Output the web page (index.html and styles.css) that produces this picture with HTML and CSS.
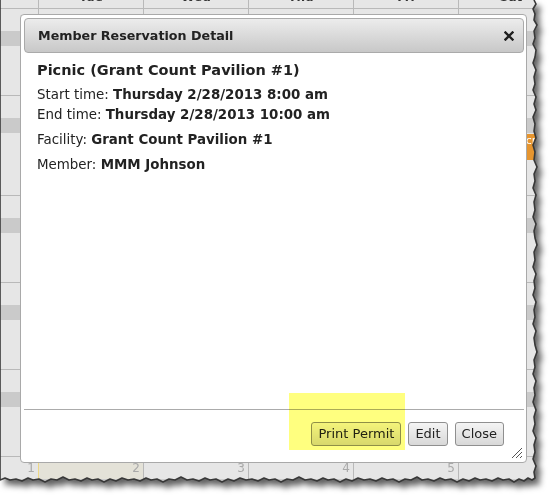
FILE: index.html
```html
<!DOCTYPE html>
<html>
<head>
<meta charset="utf-8">
<title>Member Reservation Detail</title>
<link rel="stylesheet" href="styles.css">
</head>
<body>
<div class="stage">
  <svg class="defs" width="0" height="0" aria-hidden="true">
    <defs>
      <clipPath id="tear">
        <polygon points="534,0 536,4 533,9 535,14 534,20 537,25 534,31 535,38 533,44 536,50 535,57 533,63 536,70 534,77 535,84 533,90 536,97 534,104 536,110 533,117 535,124 534,131 536,138 533,145 535,152 534,160 537,167 534,174 535,181 533,188 536,195 534,202 535,210 533,217 536,224 534,231 535,238 537,245 534,252 535,260 533,267 536,274 534,281 535,288 533,295 536,302 534,310 535,317 533,324 536,331 534,338 535,345 537,352 534,360 535,367 533,374 536,381 534,388 535,395 533,402 536,410 534,417 535,424 533,431 536,438 534,445 535,452 533,459 536,466 534,472 535,478 532,480 528,478 524,481 519,479 514,482 509,479 503,480 498,478 492,481 486,479 480,480 475,478 469,481 463,479 457,482 451,479 445,480 440,478 434,481 428,479 422,480 417,477 411,480 405,479 399,482 393,479 387,480 382,478 376,481 370,479 364,480 358,478 352,481 346,479 340,482 334,479 328,480 323,478 317,481 311,479 305,480 299,477 293,480 287,479 281,482 275,479 269,480 264,478 258,481 252,479 246,480 240,478 234,481 228,479 222,482 216,479 210,480 205,478 199,481 193,479 187,480 181,477 175,480 169,479 163,482 157,479 151,480 146,478 140,481 134,479 128,480 122,478 116,481 110,479 104,482 98,479 92,480 87,478 81,481 75,479 69,480 63,477 57,480 51,479 45,482 39,479 33,480 28,478 22,481 16,479 10,480 5,478 0,480 0,0"/>
      </clipPath>
    </defs>
  </svg>

  <div class="paper">
    <div class="sheet">
      <div class="calendar">
        <div class="cal-head">
          <div>Mon</div><div>Tue</div><div>Wed</div><div>Thu</div><div>Fri</div><div>Sat</div><div>Sun</div>
        </div>
        <div class="week">
          <div class="day"><div class="num">25</div><div class="band"></div></div>
          <div class="day"><div class="num">26</div><div class="band"></div></div>
          <div class="day"><div class="num">27</div><div class="band"></div></div>
          <div class="day"><div class="num">28</div><div class="band"></div></div>
          <div class="day"><div class="num">1</div><div class="band"></div></div>
          <div class="day"><div class="num">2</div><div class="band"></div></div>
          <div class="day"><div class="num">3</div><div class="band"></div></div>
        </div>
        <div class="week tall">
          <div class="day"><div class="num">4</div><div class="band"></div></div>
          <div class="day"><div class="num">5</div><div class="band"></div></div>
          <div class="day"><div class="num">6</div><div class="band"></div></div>
          <div class="day"><div class="num">7</div><div class="band"></div></div>
          <div class="day"><div class="num">8</div><div class="band"></div></div>
          <div class="day"><div class="num">9</div><div class="band"></div><div class="event">10a Staff Picnic</div></div>
          <div class="day"><div class="num">10</div><div class="band"></div></div>
        </div>
        <div class="week">
          <div class="day"><div class="num">11</div><div class="band"></div></div>
          <div class="day"><div class="num">12</div><div class="band"></div></div>
          <div class="day"><div class="num">13</div><div class="band"></div></div>
          <div class="day"><div class="num">14</div><div class="band"></div></div>
          <div class="day"><div class="num">15</div><div class="band"></div></div>
          <div class="day"><div class="num">16</div><div class="band"></div></div>
          <div class="day"><div class="num">17</div><div class="band"></div></div>
        </div>
        <div class="week">
          <div class="day"><div class="num">18</div><div class="band"></div></div>
          <div class="day"><div class="num">19</div><div class="band"></div></div>
          <div class="day"><div class="num">20</div><div class="band"></div></div>
          <div class="day"><div class="num">21</div><div class="band"></div></div>
          <div class="day"><div class="num">22</div><div class="band"></div></div>
          <div class="day"><div class="num">23</div><div class="band"></div></div>
          <div class="day"><div class="num">24</div><div class="band"></div></div>
        </div>
        <div class="week">
          <div class="day"><div class="num">25</div><div class="band"></div></div>
          <div class="day"><div class="num">26</div><div class="band"></div></div>
          <div class="day"><div class="num">27</div><div class="band"></div></div>
          <div class="day"><div class="num">28</div><div class="band"></div></div>
          <div class="day"><div class="num">29</div><div class="band"></div></div>
          <div class="day"><div class="num">30</div><div class="band"></div></div>
          <div class="day"><div class="num">31</div><div class="band"></div></div>
        </div>
        <div class="week">
          <div class="day"><div class="num">1</div><div class="band"></div></div>
          <div class="day today"><div class="num">2</div><div class="band"></div></div>
          <div class="day"><div class="num">3</div><div class="band"></div></div>
          <div class="day"><div class="num">4</div><div class="band"></div></div>
          <div class="day"><div class="num">5</div><div class="band"></div></div>
          <div class="day"><div class="num">6</div><div class="band"></div></div>
          <div class="day"><div class="num">7</div><div class="band"></div></div>
        </div>
      </div>

      <div class="dialog">
        <div class="titlebar">
          <span class="title">Member Reservation Detail</span>
          <svg class="close-x" width="10" height="10" viewBox="0 0 10 10"><path d="M1.5 1.5 L8.5 8.5 M8.5 1.5 L1.5 8.5" stroke="#1e1e1e" stroke-width="2.4" stroke-linecap="square"/></svg>
        </div>
        <div class="content">
          <h2 class="event-title">Picnic (Grant Count Pavilion #1)</h2>
          <p class="line first">Start time: <b>Thursday 2/28/2013 8:00 am</b></p>
          <p class="line">End time: <b>Thursday 2/28/2013 10:00 am</b></p>
          <p class="line field">Facility: <b>Grant Count Pavilion #1</b></p>
          <p class="line field">Member: <b>MMM Johnson</b></p>
        </div>
        <div class="buttonpane">
          <button class="btn">Print Permit</button>
          <button class="btn">Edit</button>
          <button class="btn">Close</button>
        </div>
        <svg class="grip" width="12" height="12" viewBox="0 0 12 12"><path d="M1 11 L11 1 M5 11 L11 5 M9 11 L11 9" stroke="#555" stroke-width="1"/></svg>
      </div>

      <div class="highlight"></div>
    </div>
  </div>

  <svg class="edge" width="556" height="499" aria-hidden="true">
    <polyline fill="none" stroke="#383838" stroke-width="1.6" stroke-linejoin="round" points="534,0 536,4 533,9 535,14 534,20 537,25 534,31 535,38 533,44 536,50 535,57 533,63 536,70 534,77 535,84 533,90 536,97 534,104 536,110 533,117 535,124 534,131 536,138 533,145 535,152 534,160 537,167 534,174 535,181 533,188 536,195 534,202 535,210 533,217 536,224 534,231 535,238 537,245 534,252 535,260 533,267 536,274 534,281 535,288 533,295 536,302 534,310 535,317 533,324 536,331 534,338 535,345 537,352 534,360 535,367 533,374 536,381 534,388 535,395 533,402 536,410 534,417 535,424 533,431 536,438 534,445 535,452 533,459 536,466 534,472 535,478 532,480 528,478 524,481 519,479 514,482 509,479 503,480 498,478 492,481 486,479 480,480 475,478 469,481 463,479 457,482 451,479 445,480 440,478 434,481 428,479 422,480 417,477 411,480 405,479 399,482 393,479 387,480 382,478 376,481 370,479 364,480 358,478 352,481 346,479 340,482 334,479 328,480 323,478 317,481 311,479 305,480 299,477 293,480 287,479 281,482 275,479 269,480 264,478 258,481 252,479 246,480 240,478 234,481 228,479 222,482 216,479 210,480 205,478 199,481 193,479 187,480 181,477 175,480 169,479 163,482 157,479 151,480 146,478 140,481 134,479 128,480 122,478 116,481 110,479 104,482 98,479 92,480 87,478 81,481 75,479 69,480 63,477 57,480 51,479 45,482 39,479 33,480 28,478 22,481 16,479 10,480 5,478 0,480 0,0"/>
  </svg>
</div>
</body>
</html>
```

FILE: styles.css
```css
html, body {
  margin: 0;
  padding: 0;
  background: #ffffff;
}

.stage {
  position: relative;
  width: 556px;
  height: 499px;
  overflow: hidden;
  font-family: "DejaVu Sans", Verdana, sans-serif;
  color: #222;
}

.defs {
  position: absolute;
  width: 0;
  height: 0;
}

.paper {
  width: 540px;
  height: 486px;
  filter: drop-shadow(5px 6px 3px rgba(0, 0, 0, 0.62));
}

.sheet {
  position: relative;
  width: 540px;
  height: 486px;
  overflow: hidden;
  background: #e6e6e6;
  clip-path: url(#tear);
}

/* background calendar */
.calendar {
  width: 735px;
  margin: -12px 0 0 -66px;
}

.cal-head {
  display: grid;
  grid-template-columns: repeat(7, 105px);
  height: 21px;
  box-sizing: border-box;
  border-bottom: 1px solid #b9b9b9;
}

.cal-head div {
  border-right: 1px solid #b9b9b9;
  text-align: center;
  font-size: 12px;
  font-weight: bold;
  line-height: 18px;
  color: #333;
}

.week {
  display: grid;
  grid-template-columns: repeat(7, 105px);
  height: 87px;
  box-sizing: border-box;
  border-bottom: 1px solid #b9b9b9;
}

.week.tall {
  height: 100px;
}

.day {
  display: flex;
  flex-direction: column;
  border-right: 1px solid #b9b9b9;
}

.day.today {
  background: #e4e2d8;
  box-shadow: -1px 0 0 #eed887;
}

.num {
  height: 22px;
  line-height: 22px;
  text-align: right;
  padding-right: 3px;
  font-size: 12px;
  color: #a9a9a9;
}

.band {
  height: 15px;
  background: #cacaca;
}

.event {
  margin: 1px 2px 0 2px;
  height: 26px;
  background: #e6952f;
  color: #fff;
  font-size: 11px;
  line-height: 13px;
  padding-left: 2px;
  overflow: hidden;
}

/* dialog */
.dialog {
  position: absolute;
  left: 20px;
  top: 14px;
  width: 507px;
  height: 449px;
  box-sizing: border-box;
  border: 1px solid #a9a9a9;
  border-radius: 4px;
  background: #ffffff;
  padding: 3px 2px 3px 3px;
  display: flex;
  flex-direction: column;
}

.titlebar {
  height: 35px;
  box-sizing: border-box;
  border: 1px solid #aaaaaa;
  border-radius: 4px;
  background: linear-gradient(#ececec, #c8c8c8);
  display: flex;
  align-items: center;
  justify-content: space-between;
  padding: 0 9px 0 13px;
  flex: none;
}

.title {
  font-size: 12.7px;
  font-weight: bold;
  color: #222;
}

.close-x {
  display: block;
}

.content {
  flex: 1;
  padding: 6px 13px 0 13px;
}

.event-title {
  margin: 0;
  font-size: 14.5px;
  line-height: 22px;
  font-weight: bold;
  color: #222;
}

.line {
  margin: 0;
  height: 20px;
  font-size: 13.4px;
  line-height: 20px;
}

.line.first {
  margin-top: 4px;
}

.line.field {
  margin-top: 5px;
}

.line b {
  font-weight: bold;
}

.buttonpane {
  flex: none;
  height: 50px;
  box-sizing: border-box;
  border-top: 1px solid #ababab;
  display: flex;
  justify-content: flex-end;
  align-items: flex-start;
  gap: 7px;
  padding: 12px 20px 0 0;
}

.btn {
  height: 24px;
  box-sizing: border-box;
  margin: 0;
  padding: 0 6px;
  border: 1px solid #8f8f8f;
  border-radius: 3px;
  background: linear-gradient(#f4f4f4, #d8d8d8);
  font-family: "DejaVu Sans", Verdana, sans-serif;
  font-size: 13px;
  line-height: 22px;
  color: #222;
}

.grip {
  position: absolute;
  right: 3px;
  bottom: 3px;
}

.highlight {
  position: absolute;
  left: 289px;
  top: 393px;
  width: 116px;
  height: 57px;
  background: rgba(255, 255, 0, 0.5);
  mix-blend-mode: multiply;
}

.edge {
  position: absolute;
  left: 0;
  top: 0;
  pointer-events: none;
}
```
